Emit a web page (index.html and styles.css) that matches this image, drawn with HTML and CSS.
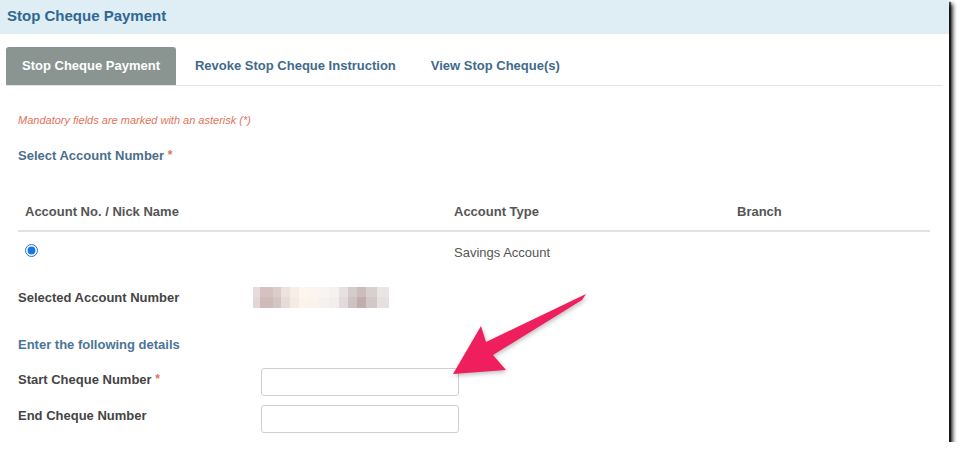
FILE: index.html
```html
<!DOCTYPE html>
<html lang="en">
<head>
  <meta charset="UTF-8"/>
  <title>Stop Cheque Payment</title>
  <link rel="stylesheet" href="styles.css">
</head>
<body>

  <div class="panel">
    <!-- Page title -->
    <div class="panel-title">Stop Cheque Payment</div>

    <!-- Tabs -->
    <ul class="tabs">
      <li class="tab active">Stop Cheque Payment</li>
      <li class="tab">Revoke Stop Cheque Instruction</li>
      <li class="tab">View Stop Cheque(s)</li>
    </ul>

    <div class="content">
      <p class="mandatory">Mandatory fields are marked with an asterisk (*)</p>

      <h3 class="section">Select Account Number <span class="req">*</span></h3>

      <table class="accounts">
        <thead>
          <tr>
            <th class="col-acc">Account No. / Nick Name</th>
            <th class="col-type">Account Type</th>
            <th>Branch</th>
          </tr>
        </thead>
        <tbody>
          <tr>
            <td class="radio-cell"><input type="radio" name="account" checked></td>
            <td class="type-cell">Savings Account</td>
            <td></td>
          </tr>
        </tbody>
      </table>

      <div class="selected-row">
        <span class="label">Selected Account Number</span>
        <span class="masked"></span>
      </div>

      <h3 class="section details">Enter the following details</h3>

      <div class="form-row">
        <label class="label">Start Cheque Number <span class="req">*</span></label>
        <input type="text" class="field">
      </div>
      <div class="form-row">
        <label class="label">End Cheque Number</label>
        <input type="text" class="field">
      </div>
    </div>

    <!-- Annotation arrow -->
    <svg class="arrow" width="160" height="100" viewBox="0 0 160 100">
      <polygon points="146,9 46,57 41,41 13,89 66,85 53,70 142,15" fill="#ef1f5d"/>
    </svg>
  </div>

</body>
</html>
```

FILE: styles.css
```css
* {
  box-sizing: border-box;
}

body {
  margin: 0;
  background-color: #ffffff;
  font-family: 'Liberation Sans', Arial, sans-serif;
}

.panel {
  position: relative;
  width: 949px;
  height: 442px;
  background-color: #fff;
  box-shadow: 4px 4px 4px rgba(0, 0, 0, 0.8), 2px 2px 1px rgba(0, 0, 0, 0.6);
  overflow: hidden;
}

.panel-title {
  height: 34px;
  line-height: 32px;
  padding-left: 7px;
  background-color: #dfedf4;
  color: #2f6792;
  font-size: 15px;
  font-weight: bold;
}

.tabs {
  list-style: none;
  display: flex;
  margin: 13px 7px 0 6px;
  padding: 0;
  border-bottom: 1px solid #e4e4e4;
}

.tab {
  height: 38px;
  line-height: 38px;
  padding: 0 16px;
  margin-right: 3px;
  font-size: 13px;
  font-weight: bold;
  color: #3f6a8c;
}

.tab.active {
  background-color: #8a9592;
  color: #fff;
  border-radius: 3px 3px 0 0;
}

.content {
  padding: 0 19px 0 18px;
}

.mandatory {
  margin: 27px 0 0;
  font-size: 11px;
  line-height: 14px;
  font-style: italic;
  color: #e2725b;
}

.section {
  margin: 20px 0 0;
  font-size: 13px;
  line-height: 16px;
  font-weight: bold;
  color: #4a6f8e;
}

.req {
  color: #e2725b;
  font-size: 12px;
  vertical-align: 1px;
}

.accounts {
  width: 912px;
  margin-top: 30px;
  border-collapse: collapse;
  font-size: 13px;
}

.accounts th {
  text-align: left;
  padding: 10px 7px 10px;
  line-height: 16px;
  color: #555;
  border-bottom: 2px solid #e2e2e2;
}

.col-acc {
  width: 429px;
}

.col-type {
  width: 283px;
}

.accounts td {
  vertical-align: top;
  padding: 13px 7px 0;
  line-height: 16px;
  color: #555;
  height: 37px;
}

.radio-cell input {
  margin: -1px 0 0;
  width: 13px;
  height: 13px;
  accent-color: #1a73e8;
}

.selected-row {
  display: flex;
  align-items: center;
  margin-top: 19px;
}

.label {
  font-size: 13px;
  line-height: 16px;
  font-weight: bold;
  color: #454545;
}

.selected-row .label {
  width: 235px;
}

.masked {
  width: 136px;
  height: 21px;
  background:
    linear-gradient(90deg, #e6dcdc 0 7px, #d4c2c0 7px 20px, #dccdca 20px 28px, #ece3dd 28px 37px, #f7efe7 37px 46px, #fdf6ee 46px 56px, #fbf5ef 56px 66px, #f8f4f1 66px 76px, #f4f2f1 76px 86px, #e6e0e0 86px 95px, #d6cbcb 95px 104px, #ccbcbc 104px 113px, #d8cfcf 113px 124px, #e9e5e5 124px 136px) top / 100% 10px no-repeat,
    linear-gradient(90deg, #e2d6d6 0 7px, #cfbbb8 7px 20px, #d6c5c2 20px 28px, #e8ddd6 28px 37px, #f5ebe2 37px 46px, #fcf4ea 46px 56px, #faf3ec 56px 66px, #f6f1ee 66px 76px, #f1eeed 76px 86px, #e2dbdb 86px 95px, #cfc2c2 95px 104px, #c2adad 104px 113px, #d3c8c8 113px 124px, #e6e1e1 124px 136px) bottom / 100% 11px no-repeat;
}

.details {
  margin-top: 29px;
  color: #4b7597;
}

.form-row {
  display: flex;
  align-items: flex-start;
  margin-top: 15px;
}

.form-row + .form-row {
  margin-top: 9px;
}

.form-row .label {
  width: 243px;
  padding-top: 3px;
}

.field {
  width: 198px;
  height: 28px;
  margin: 0;
  border: 1px solid #cfcfcf;
  border-radius: 3px;
  background: #fff;
}

.arrow {
  position: absolute;
  left: 440px;
  top: 285px;
  filter: drop-shadow(1px 2px 2px rgba(0, 0, 0, 0.25));
}
```
